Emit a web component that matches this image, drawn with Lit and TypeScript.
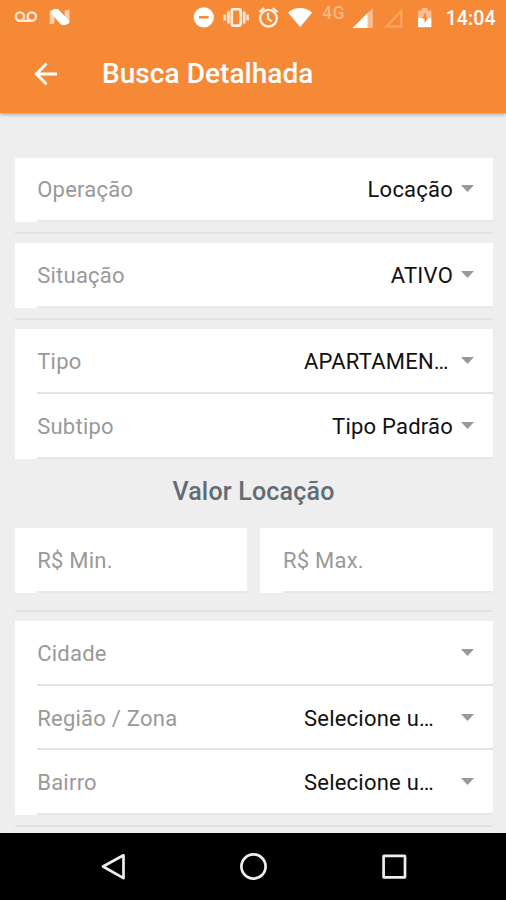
import { LitElement, html, css, svg, nothing } from "lit";
import { customElement, property } from "lit/decorators.js";

@customElement("select-row")
class SelectRow extends LitElement {
  @property() label = "";
  @property() value = "";
  @property({ type: Boolean }) wide = false;
  @property({ type: Boolean }) input = false;

  static styles = css`
    :host { display: block; height: 64.7px; box-sizing: border-box; padding-left: 22.7px; background: #fff; }
    .inner { height: 100%; box-sizing: border-box; display: flex; align-items: center; border-bottom: 2px solid #e2e2e2; padding-right: 18.5px; padding-top: 3px; font-size: 22px; line-height: 28px; }
    :host([last]) .inner { border-bottom-color: #e8e8e8; }
    .label { color: #999; letter-spacing: 0.24px; white-space: nowrap; }
    .value { color: #111; margin-left: auto; white-space: nowrap; letter-spacing: 0.22px; }
    .value.wide { width: 149px; }
    .arrow { width: 13px; height: 7px; margin-left: 8px; margin-bottom: 3px; flex: none; }
  `;

  render() {
    return html`<div class="inner">
      <span class="label">${this.label}</span>
      ${this.input
        ? nothing
        : html`<span class="value ${this.wide ? "wide" : ""}">${this.value}</span>
            <svg class="arrow" viewBox="0 0 13 7"><path d="M0 0h13L6.5 7z" fill="#999" /></svg>`}
    </div>`;
  }
}

@customElement("app-root")
class AppRoot extends LitElement {
  static styles = css`
    :host { display: flex; flex-direction: column; width: 506px; height: 900px; background: #eee; font-family: Roboto, sans-serif; overflow: hidden; }
    .header { height: 112.5px; flex: none; background: #f68936; box-shadow: 0 1px 4px rgba(0, 0, 0, 0.4); color: #fff; }
    .status { display: block; height: 36px; width: 506px; }
    .status text { font-family: Roboto, sans-serif; font-weight: 500; }
    .toolbar { height: 76px; display: flex; align-items: center; padding-left: 34px; }
    .back { width: 24px; height: 24px; }
    .title { margin: 0 0 0 44px; font-size: 28px; line-height: 34px; font-weight: 500; letter-spacing: 0.05px; }
    .content { flex: 1; min-height: 0; overflow: hidden; padding: 45px 13.5px 0 14.5px; }
    .rule { height: 2px; background: #e1e1e1; margin: 9.8px 0 9.5px; }
    .heading { margin: 0; height: 69px; line-height: 65px; text-align: center; font-size: 25px; font-weight: 500; color: #616c73; letter-spacing: 0.2px; }
    .pair { display: grid; grid-template-columns: 1fr 1fr; column-gap: 13.5px; margin-bottom: 17px; }
    .nav { height: 67px; flex: none; background: #000; display: block; width: 506px; }
  `;

  render() {
    return html`
      <header class="header">
        ${this.statusBar()}
        <div class="toolbar">
          <svg class="back" viewBox="0 0 24 24" fill="none" stroke="#fff" stroke-width="2.9">
            <path d="M12.5 1.4 2.4 12l10.1 10.2M2.4 12H23" />
          </svg>
          <h1 class="title">Busca Detalhada</h1>
        </div>
      </header>
      <main class="content">
        <select-row last label="Operação" value="Locação"></select-row>
        <div class="rule"></div>
        <select-row last label="Situação" value="ATIVO"></select-row>
        <div class="rule"></div>
        <select-row label="Tipo" value="APARTAMEN…" wide></select-row>
        <select-row last label="Subtipo" value="Tipo Padrão"></select-row>
        <h2 class="heading">Valor Locação</h2>
        <div class="pair">
          <select-row last input label="R$ Min."></select-row>
          <select-row last input label="R$ Max."></select-row>
        </div>
        <div class="rule"></div>
        <select-row label="Cidade"></select-row>
        <select-row label="Região / Zona" value="Selecione u…" wide></select-row>
        <select-row last label="Bairro" value="Selecione u…" wide></select-row>
        <div class="rule"></div>
      </main>
      <svg class="nav" viewBox="0 0 506 67" fill="none" stroke="#eee" stroke-width="2.7" stroke-linejoin="round">
        <path d="M103 33.5 123.5 22.3v22.9z" />
        <circle cx="253.5" cy="33.5" r="12.1" />
        <rect x="383.6" y="22.8" width="21.4" height="21.6" rx="0.5" />
      </svg>
    `;
  }

  private statusBar() {
    return html`<svg class="status" viewBox="0 0 506 36">
      ${svg`
        <g fill="none" stroke="#fde8d8" stroke-width="2.3">
          <circle cx="19.9" cy="16.6" r="4.2" /><circle cx="31.8" cy="16.6" r="4.2" />
          <path d="M19.7 20.8h12.1" />
        </g>
        <path d="M49.7 11.5l4.8-1.5v13.3l-4.8 1.3zM64.7 10.5l4.8-1V23l-4.8 1.3z" fill="#fcd0ad" />
        <path d="M50.8 10.8L54.5 9h3.5L69 20.8v2.4L65.5 25h-4L51 13.5z" fill="#fff" />
        <circle cx="203.8" cy="17.4" r="10.1" fill="#fff" />
        <path d="M199 17.3h9.7" stroke="#f68936" stroke-width="2.5" />
        <rect x="231.8" y="9.2" width="8.8" height="16.4" rx="1" fill="#f68936" stroke="#fff0e5" stroke-width="2.6" />
        <path d="M228.4 11.5v12M224.8 14.5v6M244.2 11.5v12M247.6 14.5v6" stroke="#fde3cf" stroke-width="2.8" />
        <circle cx="268.5" cy="18.2" r="8.3" fill="none" stroke="#fff0e5" stroke-width="2.3" />
        <path d="M268 13v5.8l4 2.6M259.3 12l5-4M277.7 12l-5-4" fill="none" stroke="#fff0e5" stroke-width="2.2" />
        <path d="M288 12.4Q300 3.5 312.2 12.4L300.2 27z" fill="#fff" />
        <text x="322" y="18.8" font-size="17.5" letter-spacing="0.6" fill="#fab784">4G</text>
        <path d="M372.8 8v20h-20z" fill="#fabd8e" />
        <path d="M367.5 13.3V28h-15z" fill="#fff" />
        <path d="M401.3 11v15.5h-15z" fill="none" stroke="#f9a967" stroke-width="2" />
        <path d="M418 10.4h3.6V8h6v2.4h3.8V18H418z" fill="#fabd8e" />
        <path d="M418 18h13.4v9.2H418z" fill="#fff" />
        <path d="M426 12l-4 6.5h2.5V23l4-5.5H426z" fill="#f68936" />
        <text x="445.7" y="25" font-size="19.5" letter-spacing="0.1" fill="#fff">14:04</text>
      `}
    </svg>`;
  }
}
